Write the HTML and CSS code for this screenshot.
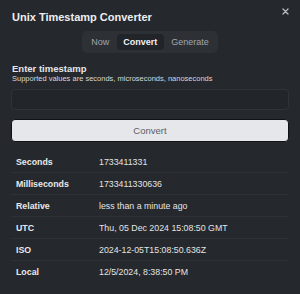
FILE: index.html
```html
<!DOCTYPE html>
<html lang="en">
<head>
    <meta charset="UTF-8">
    <title>Unix Timestamp Converter</title>
    <link rel="stylesheet" href="styles.css">
</head>
<body>
    <div class="dialog">
        <div class="header">
            <div class="title">Unix Timestamp Converter</div>
            <button class="close" type="button">
                <svg width="7" height="7" viewBox="0 0 7 7"><path d="M1 1L6 6M6 1L1 6" stroke="#b8bbbf" stroke-width="1.3" stroke-linecap="round"/></svg>
            </button>
        </div>
        <div class="tabs-wrap">
            <div class="tabs">
                <span class="tab">Now</span>
                <span class="tab active">Convert</span>
                <span class="tab">Generate</span>
            </div>
        </div>
        <div class="field">
            <label for="ts">Enter timestamp</label>
            <div class="hint">Supported values are seconds, microseconds, nanoseconds</div>
            <input type="text" id="ts" class="ts-input">
        </div>
        <button type="button" class="convert-button">Convert</button>
        <div class="results">
            <div class="row"><span class="key">Seconds</span><span class="val">1733411331</span></div>
            <div class="row"><span class="key">Milliseconds</span><span class="val">1733411330636</span></div>
            <div class="row"><span class="key">Relative</span><span class="val">less than a minute ago</span></div>
            <div class="row"><span class="key">UTC</span><span class="val">Thu, 05 Dec 2024 15:08:50 GMT</span></div>
            <div class="row"><span class="key">ISO</span><span class="val">2024-12-05T15:08:50.636Z</span></div>
            <div class="row"><span class="key">Local</span><span class="val">12/5/2024, 8:38:50 PM</span></div>
        </div>
    </div>
</body>
</html>
```

FILE: styles.css
```css
body {
    margin: 0;
    background-color: #25282c;
    font-family: "Liberation Sans", Arial, sans-serif;
    color: #e6e7e9;
}
.dialog {
    padding: 9px 11px 0 11px;
}
.header {
    display: flex;
    justify-content: space-between;
    align-items: flex-start;
    height: 20px;
}
.title {
    font-size: 11px;
    font-weight: bold;
    padding-left: 1px;
    padding-top: 2px;
    color: #eeeff1;
}
.close {
    display: flex;
    background: none;
    border: none;
    padding: 0;
    margin: -1px 0 0 0;
    cursor: pointer;
}
.close svg {
    display: block;
}
.tabs-wrap {
    display: flex;
    justify-content: center;
    margin-top: 2px;
}
.tabs {
    display: flex;
    gap: 1px;
    background-color: #2d3034;
    border-radius: 5px;
    padding: 3px;
}
.tab {
    font-size: 9px;
    color: #a3a6ab;
    padding: 3px 6.5px;
    border-radius: 4px;
    line-height: 10px;
}
.tab.active {
    background-color: #212428;
    color: #f1f2f4;
    font-weight: bold;
}
.field {
    margin-top: 10px;
}
.field label {
    display: block;
    font-size: 9.5px;
    font-weight: bold;
    line-height: 11px;
    padding-left: 1px;
}
.hint {
    font-size: 7.5px;
    line-height: 9px;
    padding-left: 1px;
    color: #d6d8db;
}
.ts-input {
    display: block;
    box-sizing: border-box;
    width: 100%;
    height: 21px;
    margin-top: 6px;
    background-color: #222529;
    border: 1px solid #303337;
    border-radius: 4px;
}
.convert-button {
    display: block;
    box-sizing: border-box;
    width: 100%;
    height: 23px;
    margin-top: 9px;
    background-color: #e5e7eb;
    border: 1px solid #111214;
    border-radius: 4px;
    font-family: inherit;
    font-size: 9.5px;
    color: #5d6066;
    cursor: pointer;
}
.results {
    margin-top: 9px;
}
.row {
    display: flex;
    align-items: center;
    height: 21px;
    border-bottom: 1px solid #2e3135;
    font-size: 8.8px;
}
.row:last-child {
    border-bottom: none;
}
.key {
    width: 83px;
    padding-left: 5px;
    font-weight: bold;
    color: #e8e9eb;
}
.val {
    color: #e3e4e6;
}
```
